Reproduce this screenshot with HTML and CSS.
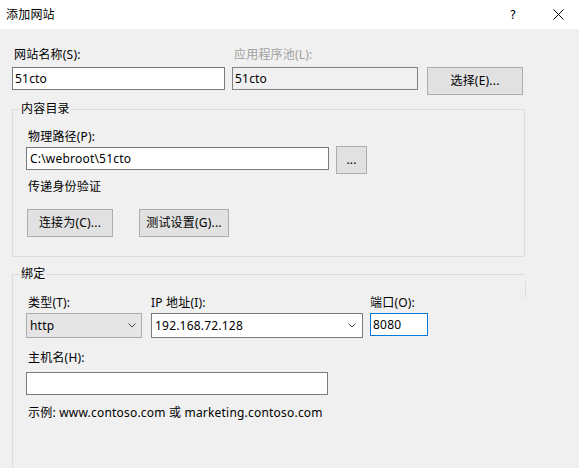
FILE: index.html
```html
<!DOCTYPE html>
<html lang="zh-CN">
<head>
<meta charset="utf-8">
<title>添加网站</title>
<link rel="stylesheet" href="styles.css">
</head>
<body>
<div class="titlebar">
  <span class="title">添加网站</span>
  <span class="caption-btn help">?</span>
  <span class="caption-btn close"><svg width="11" height="11" viewBox="0 0 11 11"><path d="M0.5 0.5 L10.5 10.5 M10.5 0.5 L0.5 10.5" stroke="#000" stroke-width="1" fill="none"/></svg></span>
</div>

<div class="top-row">
  <div class="name-field">
    <div class="label">网站名称(S):</div>
    <div class="textbox">51cto</div>
  </div>
  <div class="pool-field">
    <div class="label disabled">应用程序池(L):</div>
    <div class="textbox disabled">51cto</div>
  </div>
  <div class="btn btn-select">选择(E)...</div>
</div>

<fieldset class="group group-content">
  <legend>内容目录</legend>
  <div class="group-inner">
    <div class="label">物理路径(P):</div>
    <div class="path-row">
      <div class="textbox path">C:\webroot\51cto</div>
      <div class="btn btn-browse">...</div>
    </div>
    <div class="label auth-label">传递身份验证</div>
    <div class="btn-row">
      <div class="btn btn-connect">连接为(C)...</div>
      <div class="btn btn-test">测试设置(G)...</div>
    </div>
  </div>
</fieldset>

<fieldset class="group group-binding">
  <legend>绑定</legend>
  <div class="group-inner">
    <div class="bind-row">
      <div class="bind-field">
        <div class="label">类型(T):</div>
        <div class="combo select-type"><span>http</span><svg width="8" height="5" viewBox="0 0 8 5"><polyline points="0.5,0.5 4,4 7.5,0.5" stroke="#444" stroke-width="1" fill="none"/></svg></div>
      </div>
      <div class="bind-field ip-field">
        <div class="label flush">IP 地址(I):</div>
        <div class="combo ipbox"><span>192.168.72.128</span><svg width="8" height="5" viewBox="0 0 8 5"><polyline points="0.5,0.5 4,4 7.5,0.5" stroke="#444" stroke-width="1" fill="none"/></svg></div>
      </div>
      <div class="bind-field port-field">
        <div class="label flush">端口(O):</div>
        <div class="textbox port">8080</div>
      </div>
    </div>
    <div class="label host-label">主机名(H):</div>
    <div class="textbox host"></div>
    <div class="label hint">示例: www.contoso.com 或 marketing.contoso.com</div>
  </div>
</fieldset>
</body>
</html>
```

FILE: styles.css
```css
* { box-sizing: border-box; }
html, body { margin: 0; padding: 0; }
body {
  width: 579px;
  height: 468px;
  overflow: hidden;
  background: #f0f0f0;
  font-family: "Noto Sans", "Noto Sans CJK SC", sans-serif;
  font-size: 12px;
  line-height: 16px;
  letter-spacing: 0.2px;
  color: #000;
}

.titlebar {
  height: 29px;
  background: #fff;
  display: flex;
  align-items: center;
  padding-left: 6px;
}
.title { flex: 1; }
.caption-btn {
  display: flex;
  align-items: center;
  height: 29px;
}
.help {
  width: 46px;
  justify-content: center;
  font-family: "DejaVu Sans", sans-serif;
  font-size: 12px;
}
.close {
  width: 43px;
  padding-left: 17px;
}

.label { padding-left: 2px; white-space: nowrap; }
.label.flush { padding-left: 0; }
.label.disabled { color: #a0a0a0; }

.textbox {
  height: 23px;
  border: 1px solid #7a7a7a;
  background: #fff;
  display: flex;
  align-items: center;
  padding-left: 2px;
  white-space: nowrap;
}
.textbox.disabled {
  background: #f0f0f0;
  border-color: #838383;
}

.btn {
  height: 28px;
  display: flex;
  align-items: center;
  justify-content: center;
  background: #e1e1e1;
  border: 1px solid #adadad;
  white-space: nowrap;
}

.top-row {
  display: flex;
  align-items: flex-start;
  padding: 18px 0 0 12px;
}
.top-row .label { margin-bottom: 4px; }
.name-field { width: 213px; }
.pool-field { width: 186px; margin-left: 7px; }
.btn-select { width: 96px; margin-left: 9px; margin-top: 20px; }

.group {
  margin: 6px 0 0 12px;
  width: 513px;
  border: 1px solid #dcdcdc;
  padding: 0 0 19px 7px;
  min-width: 0;
}
.group legend {
  padding: 0 1px;
  line-height: 16px;
}
.group-inner {
  margin-left: 6px;
  padding-top: 12px;
}

.path-row {
  display: flex;
  align-items: flex-start;
  margin-top: 1px;
}
.path { width: 303px; margin-top: 1px; padding-left: 3px; }
.btn-browse { width: 31px; margin-left: 7px; }
.auth-label { margin-top: 5px; }
.btn-row { display: flex; margin-top: 14px; }
.btn-connect { width: 86px; margin-left: 1px; }
.btn-test { width: 90px; margin-left: 26px; }

.group-binding {
  position: relative;
  margin-top: 9px;
  border-right: 0;
  border-bottom: 0;
  height: 202px;
  padding-bottom: 0;
}
.group-binding::after {
  content: "";
  position: absolute;
  right: -1px;
  top: -1px;
  width: 1px;
  height: 17px;
  background: #dcdcdc;
}
.group-binding .group-inner { padding-top: 13px; }

.bind-row { display: flex; align-items: flex-start; }
.bind-field .label { margin-bottom: 2px; }
.ip-field { margin-left: 9px; }
.port-field { margin-left: 7px; }

.combo {
  height: 25px;
  display: flex;
  align-items: center;
  justify-content: space-between;
  white-space: nowrap;
}
.select-type {
  width: 116px;
  background: #e5e5e5;
  border: 1px solid #acacac;
  padding: 0 5px 0 3px;
}
.ipbox {
  width: 212px;
  background: #fff;
  border: 1px solid #7a7a7a;
  padding: 0 6px 0 3px;
}
.port {
  width: 58px;
  border-color: #0078d7;
}

.host-label { margin-top: 12px; }
.host { width: 302px; margin-top: 6px; }
.hint { margin-top: 10px; }
```
